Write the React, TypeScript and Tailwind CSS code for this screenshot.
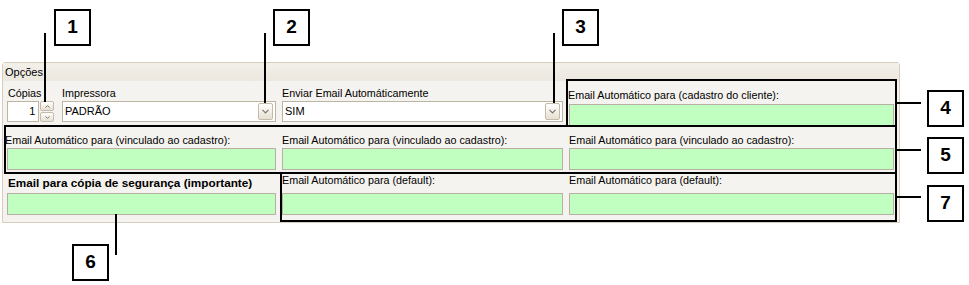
import React from 'react';

const font = { fontFamily: '"Liberation Sans", Arial, sans-serif' };

const Chevron = () => (
  <svg width="7" height="5" viewBox="0 0 7 5">
    <path d="M0.5 0.8 L3.5 3.8 L6.5 0.8" fill="none" stroke="#7d7466" strokeWidth="1.2" />
  </svg>
);

const Select: React.FC<{ value: string; className: string }> = ({ value, className }) => (
  <div className={`relative h-[21px] border border-[#bdb4a3] bg-white flex items-center pl-[2px] text-[11px] text-black ${className}`}>
    <span>{value}</span>
    <div className="absolute right-[2px] top-[1px] w-[15px] h-[17px] rounded-[2px] border border-[#c6bba8] bg-gradient-to-b from-white to-[#e6e0d3] flex items-center justify-center">
      <Chevron />
    </div>
  </div>
);

const GreenInput: React.FC<{ className: string }> = ({ className }) => (
  <div className={`h-[22px] border border-[#b7b0a2] bg-[#c0ffc0] ${className}`} />
);

const Label: React.FC<{ text: string; className?: string }> = ({ text, className = '' }) => (
  <div className={`h-[13px] leading-[13px] text-[10.75px] text-black whitespace-nowrap ${className}`}>{text}</div>
);

const Callout: React.FC<{ n: string; className: string }> = ({ n, className }) => (
  <div className={`absolute w-[37px] h-[37px] border-2 border-black bg-white flex items-center justify-center text-[19px] font-bold text-black ${className}`}>
    {n}
  </div>
);

export default function App() {
  return (
    <div className="relative w-[969px] h-[285px] bg-white overflow-hidden" style={font}>
      {/* Panel */}
      <div className="ml-[2px] mt-[62px] w-[898px] h-[161px] border border-[#d6cdbc] rounded-t-[3px] bg-[#f5f3ef] flex flex-col">
        <div className="h-[18px] bg-gradient-to-b from-[#f3f0ea] to-[#ece8df] text-[11px] leading-[18px] pl-[2px] text-black">Opções</div>

        {/* Row 1 */}
        <div className="h-[46px] flex">
          <div className="ml-[4px] w-[47px] flex flex-col pt-[6px]">
            <Label text="Cópias" className="pl-[1px]" />
            <div className="mt-[1px] flex h-[21px]">
              <div className="w-[33px] border border-[#bdb4a3] bg-white text-[11px] flex items-center justify-end pr-[3px]">1</div>
              <div className="w-[15px] flex flex-col pl-[1px]">
                <div className="h-[10px] rounded-[2px] border border-[#c6bba8] bg-gradient-to-b from-white to-[#e6e0d3] flex items-center justify-center">
                  <svg width="5" height="3" viewBox="0 0 5 3"><path d="M0.5 2.6 L2.5 0.6 L4.5 2.6" fill="none" stroke="#7d7466" strokeWidth="1" /></svg>
                </div>
                <div className="h-[10px] mt-[1px] rounded-[2px] border border-[#c6bba8] bg-gradient-to-b from-white to-[#e6e0d3] flex items-center justify-center">
                  <svg width="5" height="3" viewBox="0 0 5 3"><path d="M0.5 0.4 L2.5 2.4 L4.5 0.4" fill="none" stroke="#7d7466" strokeWidth="1" /></svg>
                </div>
              </div>
            </div>
          </div>
          <div className="ml-[8px] w-[214px] flex flex-col pt-[6px]">
            <Label text="Impressora" />
            <Select value="PADRÃO" className="mt-[1px] w-[214px]" />
          </div>
          <div className="ml-[6px] w-[281px] flex flex-col pt-[6px]">
            <Label text="Enviar Email Automáticamente" />
            <Select value="SIM" className="mt-[1px] w-[281px]" />
          </div>
          <div className="ml-[5px] w-[326px] flex flex-col pt-[8px]">
            <Label text="Email Automático para (cadastro do cliente):" />
            <GreenInput className="mt-[2px] ml-[1px] w-[325px]" />
          </div>
        </div>

        {/* Row 2 */}
        <div className="h-[45px] flex">
          <div className="ml-[2px] w-[271px] flex flex-col pt-[7px]">
            <Label text="Email Automático para (vinculado ao cadastro):" />
            <GreenInput className="mt-[1px] ml-[2px] w-[269px]" />
          </div>
          <div className="ml-[6px] w-[281px] flex flex-col pt-[7px]">
            <Label text="Email Automático para (vinculado ao cadastro):" />
            <GreenInput className="mt-[1px] w-[281px]" />
          </div>
          <div className="ml-[6px] w-[325px] flex flex-col pt-[7px]">
            <Label text="Email Automático para (vinculado ao cadastro):" />
            <GreenInput className="mt-[1px] w-[325px]" />
          </div>
        </div>

        {/* Row 3 */}
        <div className="flex-1 flex">
          <div className="ml-[4px] w-[269px] flex flex-col pt-[4px]">
            <div className="h-[13px] leading-[13px] text-[11.75px] font-bold text-black whitespace-nowrap pl-[1px]">
              Email para cópia de segurança (importante)
            </div>
            <GreenInput className="mt-[4px] w-[269px]" />
          </div>
          <div className="ml-[6px] w-[281px] flex flex-col pt-[2px]">
            <Label text="Email Automático para (default):" />
            <GreenInput className="mt-[6px] w-[281px]" />
          </div>
          <div className="ml-[6px] w-[325px] flex flex-col pt-[2px]">
            <Label text="Email Automático para (default):" />
            <GreenInput className="mt-[6px] w-[325px]" />
          </div>
        </div>
      </div>

      {/* Annotation frames */}
      <div className="absolute left-[566px] top-[79px] w-[331px] h-[48px] border-2 border-black" />
      <div className="absolute left-[4px] top-[125px] w-[893px] h-[49px] border-2 border-black" />
      <div className="absolute left-[280px] top-[172px] w-[617px] h-[50px] border-2 border-black" />

      {/* Leader lines */}
      <div className="absolute left-[44px] top-[33px] w-[2px] h-[69px] bg-black" />
      <div className="absolute left-[264px] top-[33px] w-[2px] h-[70px] bg-black" />
      <div className="absolute left-[553px] top-[33px] w-[2px] h-[70px] bg-black" />
      <div className="absolute left-[896px] top-[102px] w-[25px] h-[2px] bg-black" />
      <div className="absolute left-[896px] top-[149px] w-[25px] h-[2px] bg-black" />
      <div className="absolute left-[896px] top-[196px] w-[25px] h-[2px] bg-black" />
      <div className="absolute left-[115px] top-[214px] w-[2px] h-[41px] bg-black" />

      {/* Callouts */}
      <Callout n="1" className="left-[54px] top-[9px]" />
      <Callout n="2" className="left-[273px] top-[9px]" />
      <Callout n="3" className="left-[562px] top-[9px]" />
      <Callout n="4" className="left-[927px] top-[90px]" />
      <Callout n="5" className="left-[927px] top-[137px]" />
      <Callout n="6" className="left-[72px] top-[244px]" />
      <Callout n="7" className="left-[927px] top-[185px]" />
    </div>
  );
}
